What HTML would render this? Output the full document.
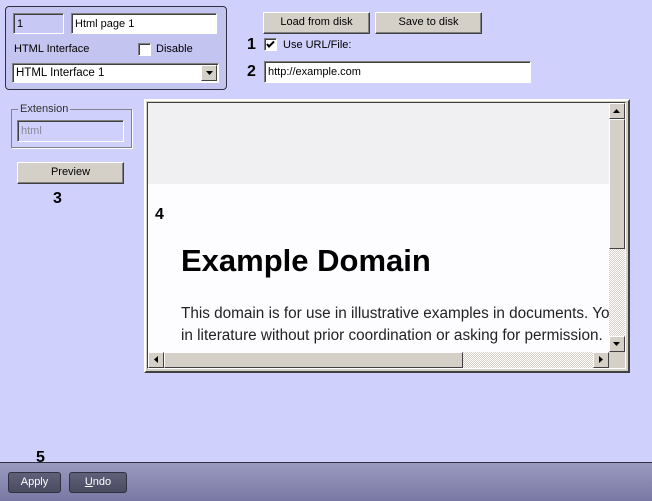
<!DOCTYPE html>
<html><head><meta charset="utf-8"><style>
*{box-sizing:border-box;margin:0;padding:0}
body{width:652px;height:501px;background:#d0d0fc;font-family:"Liberation Sans",Arial,sans-serif;font-size:11px;position:relative;overflow:hidden;color:#000}
.a{position:absolute}
.inp{position:absolute;background:#fff;border:1px solid;border-color:#808080 #fff #fff #808080;box-shadow:inset 1px 1px 0 #404040;padding:4px 3px 0;font-size:11px;white-space:nowrap}
.btn{position:absolute;background:#d4d0c8;border:1px solid;border-color:#fff #404040 #404040 #fff;box-shadow:inset -1px -1px 0 #808080;text-align:center;font-size:11px;line-height:19px}
.cb{position:absolute;width:13px;height:13px;background:#fff;border:1px solid;border-color:#808080 #fff #fff #808080;box-shadow:inset 1px 1px 0 #404040}
.num{position:absolute;font-weight:bold;font-size:16px}
.sbb{position:absolute;width:16px;height:16px;background:#d4d0c8;border:1px solid;border-color:#fff #404040 #404040 #fff}
</style></head><body>
<div class="a" style="left:5px;top:6px;width:222px;height:84px;background:#c4c4f0;border:1px solid #303040;border-radius:4px"></div>
<div class="inp" style="left:13px;top:13px;width:51px;height:21px;background:#c8c8f4">1</div>
<div class="inp" style="left:71px;top:13px;width:146px;height:21px">Html page 1</div>
<div class="a" style="left:14px;top:43px">HTML Interface</div>
<div class="cb" style="left:138px;top:43px"></div>
<div class="a" style="left:156px;top:43px">Disable</div>
<div class="inp" style="left:12px;top:63px;width:207px;height:20px;font-size:11.5px;padding-top:3px">HTML Interface 1</div>
<div class="a" style="left:201px;top:65px;width:16px;height:16px;background:#d4d0c8;border:1px solid;border-color:#fff #404040 #404040 #fff"><svg width="14" height="14" style="position:absolute;left:0;top:0"><path d="M4 5h7l-3.5 4z" fill="#000"/></svg></div>

<div class="btn" style="left:263px;top:12px;width:107px;height:22px">Load from disk</div>
<div class="btn" style="left:375px;top:12px;width:107px;height:22px">Save to disk</div>
<div class="num" style="left:247px;top:36px">1</div>
<div class="cb" style="left:264px;top:38px"><svg width="11" height="11" style="position:absolute;left:0;top:0"><path d="M2 5l2 2.5 5-5" stroke="#000" stroke-width="2" fill="none"/></svg></div>
<div class="a" style="left:283px;top:39px">Use URL/File:</div>
<div class="num" style="left:247px;top:63px">2</div>
<div class="inp" style="left:264px;top:61px;width:267px;height:22px">http://example.com</div>

<div class="a" style="left:11px;top:109px;width:121px;height:39px;border:1px solid #808090;box-shadow:1px 1px 0 #fff"></div>
<div class="a" style="left:18px;top:103px;background:#d0d0fc;padding:0 2px;color:#303030">Extension</div>
<div class="inp" style="left:17px;top:120px;width:107px;height:22px;background:#d0d0fc;color:#8a8a9a">html</div>
<div class="btn" style="left:17px;top:162px;width:107px;height:22px">Preview</div>
<div class="num" style="left:53px;top:190px">3</div>

<div class="a" style="left:144px;top:99px;width:486px;height:274px;border:2px solid;border-color:#fff #404040 #404040 #fff;background:#d4d0c8"></div>
<div class="a" style="left:147px;top:102px;width:479px;height:267px;border:1px solid #404040;border-right-color:#fff;border-bottom-color:#fff;overflow:hidden;background:#fdfdff">
<div class="a" style="left:0;top:0;width:462px;height:81px;background:#f0f0f2"></div>
<div class="num" style="left:7px;top:103px">4</div>
<div class="a" style="left:33px;top:140px;font-size:31px;font-weight:bold;white-space:nowrap">Example Domain</div>
<div class="a" style="left:33px;top:200px;font-size:15.3px;line-height:22px;white-space:nowrap;width:429px;overflow:hidden;color:#222">This domain is for use in illustrative examples in documents. You may use this<br>in literature without prior coordination or asking for permission.</div>
<div class="a" style="left:461px;top:0;width:16px;height:249px;background:repeating-conic-gradient(#d4d0c8 0 25%,#fff 0 50%) 0 0/2px 2px"></div>
<div class="sbb" style="left:461px;top:0"><svg width="14" height="14"><path d="M3 9h7l-3.5-4z"/></svg></div>
<div class="a" style="left:461px;top:16px;width:16px;height:130px;background:#d4d0c8;border:1px solid;border-color:#fff #404040 #404040 #fff"></div>
<div class="sbb" style="left:461px;top:233px"><svg width="14" height="14"><path d="M3 5h7l-3.5 4z"/></svg></div>
<div class="a" style="left:0;top:249px;width:461px;height:16px;background:repeating-conic-gradient(#d4d0c8 0 25%,#fff 0 50%) 0 0/2px 2px"></div>
<div class="sbb" style="left:0;top:249px"><svg width="14" height="14"><path d="M9 3v7l-4-3.5z"/></svg></div>
<div class="a" style="left:16px;top:249px;width:299px;height:16px;background:#d4d0c8;border:1px solid;border-color:#fff #404040 #404040 #fff"></div>
<div class="sbb" style="left:445px;top:249px"><svg width="14" height="14"><path d="M5 3v7l4-3.5z"/></svg></div>
<div class="a" style="left:461px;top:249px;width:16px;height:16px;background:#d4d0c8"></div>
</div>

<div class="a" style="left:0;top:462px;width:652px;height:39px;background:linear-gradient(#9a9ac0,#7878a4);border-top:1px solid #303040"></div>
<div class="num" style="left:36px;top:449px;z-index:2">5</div>
<div class="a" style="left:8px;top:472px;width:53px;height:21px;border:1px solid #303040;border-radius:3px;background:linear-gradient(#60607a,#4a4a60);color:#fff;text-align:center;line-height:19px">Apply</div>
<div class="a" style="left:69px;top:472px;width:58px;height:21px;border:1px solid #303040;border-radius:3px;background:linear-gradient(#60607a,#4a4a60);color:#fff;text-align:center;line-height:19px"><u>U</u>ndo</div>
</body></html>
